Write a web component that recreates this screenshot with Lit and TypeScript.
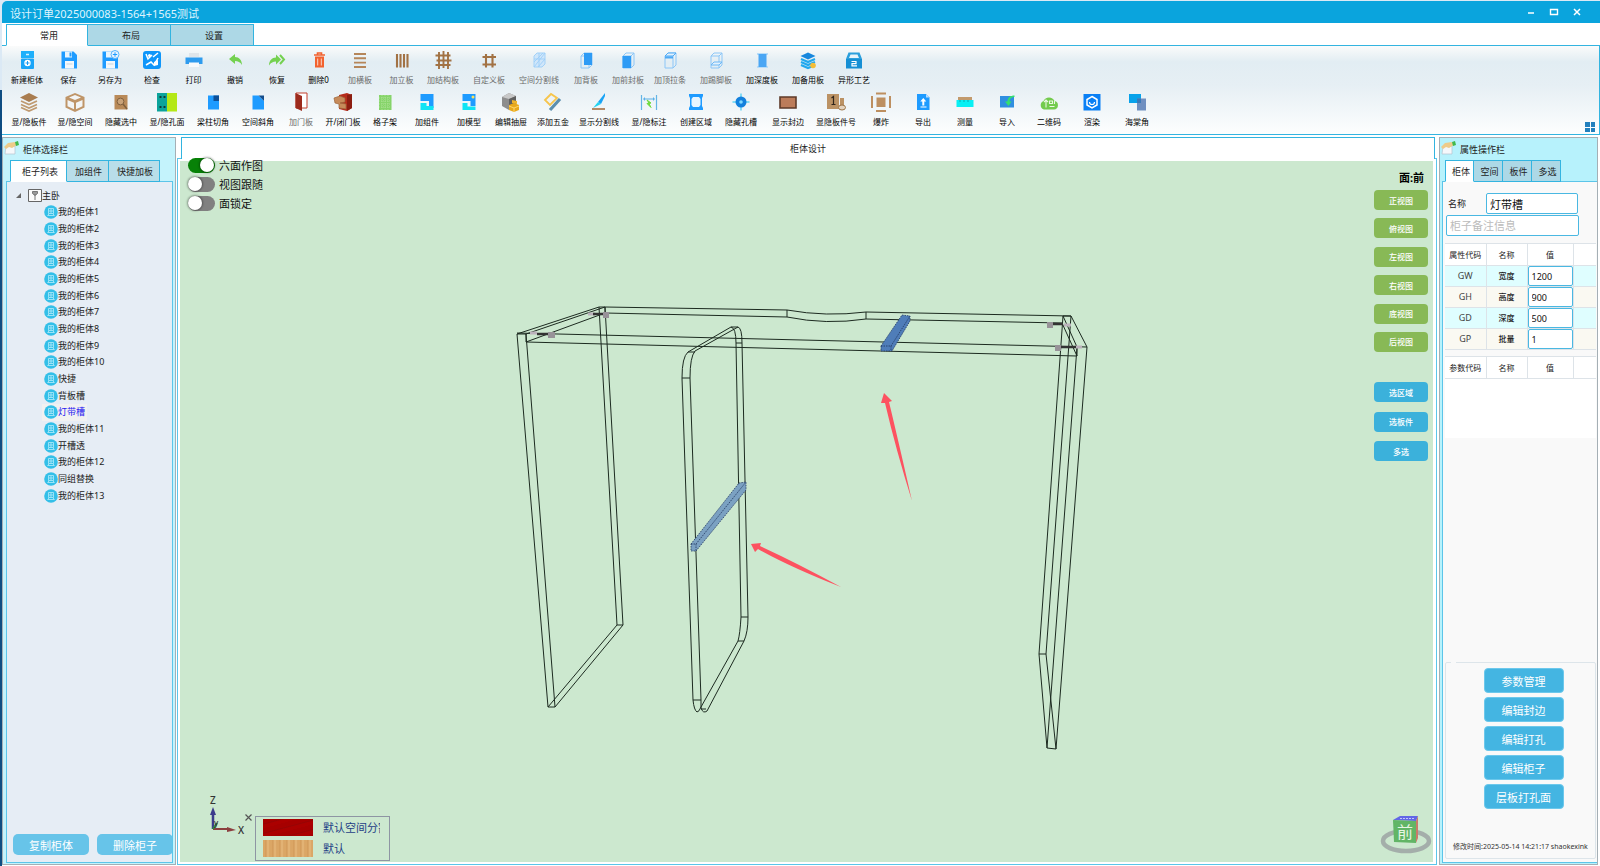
import { LitElement, html, css, svg, SVGTemplateResult } from "lit";
import { customElement, state } from "lit/decorators.js";
import { classMap } from "lit/directives/class-map.js";
import { styleMap } from "lit/directives/style-map.js";

const TAN = "#b5865a";
const BROWN = "#a27244";
const BLUE = "#1e9bff";
const CYAN = "#10e4f4";

const cubeFrame = svg`<path d="M5 6h8v12H5zM5 6l3-3h8v12l-3 3M13 6l3-3" fill="none" stroke="#8cc6f7" stroke-width="1"/>`;

const icons: Record<string, SVGTemplateResult> = {
  cabinet: svg`<rect x="4" y="1" width="13" height="7" fill="#1fb0fb"/><rect x="4" y="8.500" width="13" height="10.500" rx="1" fill="#1aa5f8"/><path d="M9 4.500h3" stroke="#d7f1ff" stroke-width="1.500"/><circle cx="10.500" cy="13" r="3.200" fill="#fff"/><path d="M8.500 13h4M10.500 11v4" stroke="#1a9df5"/>`,
  save: svg`<path d="M2.500 1.500h12l3.500 3.500v13.500h-15.500z" fill="${BLUE}"/><path d="M6 1.500h7v6h-7z" fill="#e8f4fd"/><path d="M10.500 2.500h2v4h-2z" fill="${BLUE}"/><path d="M6 11h9v7.500h-9z" fill="#f4f8fb"/><path d="M7.500 14h6" stroke="#c6d4de"/>`,
  saveas: svg`<path d="M2.500 1.500h12l3.500 3.500v13.500h-15.500z" fill="${BLUE}"/><path d="M6 1.500h6v6h-6z" fill="#e8f4fd"/><path d="M6 11h9v7.500h-9z" fill="#f4f8fb"/><path d="M7.500 14h6" stroke="#c6d4de"/><circle cx="15" cy="4.500" r="4" fill="#e6f3ff" stroke="#58b4fb"/><path d="M12.800 4.500h4.400M15 2.300v4.400" stroke="${BLUE}"/>`,
  check: svg`<rect x="1" y="1" width="18" height="18" rx="3" fill="#0f96fa"/><path d="M4 4l2 5 4-4M11 7l5-4M4 15l5-3 3 3 4-7" fill="none" stroke="#fff" stroke-width="1.500"/><circle cx="7.500" cy="5.500" r="1.500" fill="#fff"/><path d="M12 12l4-2v5l-4 1z" fill="#fff"/>`,
  print: svg`<path d="M5 3h10v4h-10z" fill="#dfe5ea"/><path d="M1.500 7.500h17v6.500h-17z" fill="#2e9bee"/><path d="M5 12.500h10v4.500h-10z" fill="#f7fafc"/>`,
  undo: svg`<path d="M4 9l6-5v3c4 0 7 3 7 8-2-3-4-4-7-4v3z" fill="#74d150"/>`,
  redo: svg`<path d="M14 9.500l-5-5v3c-4 0-7 3-7 8 2-3 4-4 7-4v3z" fill="#74d150"/><path d="M13 5l4 4.500-4 4.500" fill="none" stroke="#74d150" stroke-width="2"/>`,
  trash: svg`<path d="M5 5h11M8.500 5v-2h4v2" fill="none" stroke="#f2622f" stroke-width="1.600"/><path d="M6 6.500h9v11h-9z" fill="#f2622f"/><path d="M8.700 8.500v7M12.300 8.500v7" stroke="#fbe3da" stroke-width=".9"/>`,
  hboard: svg`<path d="M4 4h12M4 8.300h12M4 12.600h12M4 17h12" stroke="${TAN}" stroke-width="1.900"/>`,
  vboard: svg`<path d="M5 4v13.500M8.500 4v13.500M12 4v13.500M15.500 4v13.500" stroke="${BROWN}" stroke-width="2.100"/>`,
  grid3: svg`<path d="M6 2v17M10.500 1v17M15 2v17M2.500 5.500h15M3.500 10.500h15M2.500 15h15" stroke="${BROWN}" stroke-width="1.900"/>`,
  grid2: svg`<path d="M7 4v13.500M13.500 4v13.500M3.500 7h13.500M3.500 14.500h13.500" stroke="${BROWN}" stroke-width="2.100"/>`,
  split: svg`<path d="M5 6l3-3h8v11l-3 3h-8z" fill="#cfe6fa" stroke="#a2d1f8"/><path d="M5 17l11-14M5 12l9-9M9 17l7-8M5 9h11M10 3v14" stroke="#9ccef8" stroke-width=".9"/>`,
  back: svg`${cubeFrame}<path d="M8 3h8v12h-8z" fill="#2e9bf5"/>`,
  front: svg`${cubeFrame}<path d="M4.500 6h8.500v12h-8.500z" fill="#2e9bf5"/>`,
  top: svg`${cubeFrame}<path d="M5 6l3-3h8l-3 3z" fill="#e2f1fd" stroke="#4faaf5"/><path d="M5 6.500h8v2h-8z" fill="#4faaf5"/>`,
  foot: svg`${cubeFrame}<path d="M5 15l3-3h8l-3 3z" fill="#e2f1fd" stroke="#6db8f6"/>`,
  depth: svg`<path d="M5 3h11v2h-11zM5 16h11v2h-11z" fill="#b8dcf8"/><path d="M6.500 4h8v13h-8z" fill="#4aa6f4"/>`,
  spare: svg`<path d="M10 2.500l7.500 3.500-7.500 3.500-7.500-3.500z" fill="#1787dd"/><path d="M3 9l7 3 7-3M3 12l7 3 7-3M3 15l7 3 5-2" fill="none" stroke="#21a8ee" stroke-width="2.200"/><circle cx="15" cy="15.500" r="2.800" fill="#f4bd38"/>`,
  craft: svg`<path d="M2 9l2.500-6.500h11l2.500 6.500z" fill="#2b9fdc"/><path d="M5 8l1.500-3.500h7l1.500 3.500z" fill="#e8f4fa"/><path d="M2 9h16v9.500h-16z" fill="#168fd4"/><path d="M7.500 11.500h4.500v2.200h-4v2.200h5" fill="none" stroke="#fff" stroke-width="1.200"/>`,

  layers: svg`<path d="M10 1l9 4.500-9 4.500-9-4.500z" fill="#a97d50"/><path d="M2 9l8 3.500 8-3.500M2 12.500l8 3.500 8-3.500M2 15.500l8 3.500 8-3.500" fill="none" stroke="#bf9a70" stroke-width="1.700"/>`,
  box: svg`<path d="M10 1l9.500 4v10.500l-9.500 4.500-9.500-4.500v-10.500z" fill="#bf9568"/><path d="M10 3l6 2.500-6 2.500-6-2.500zM2.500 8l6.500 2.800v6.500l-6.500-3zM17.500 8l-6.500 2.800v6.500l6.500-3z" fill="#f3f5f5"/>`,
  hidden: svg`<path d="M3.500 3h13v14.500h-13z" fill="#b98a58"/><circle cx="9.500" cy="9.500" r="3.400" fill="#c9a278" stroke="#80603d"/><path d="M12 12l4 5" stroke="#80603d" stroke-width="1.500"/>`,
  holes: svg`<path d="M0 1h10v18.500h-10z" fill="#0ca39b"/><path d="M10 1h10v18.500h-10z" fill="#b4e817"/><path d="M2.500 5h2M6.500 5h2M2.500 15h2M6.500 15h2" stroke="#103838" stroke-width="1.800"/>`,
  notch: svg`<path d="M5 3.500h11v14h-11z" fill="${BLUE}"/><path d="M10.500 3.500h5.500v5.500h-5.500z" fill="#0d4f96"/>`,
  bevel: svg`<path d="M4.500 3.500h6l5.500 5.500v8.500h-11.500z" fill="${BLUE}"/><path d="M10.500 3.500h5.500v5.500z" fill="#144e8c"/>`,
  door: svg`<path d="M5 1h11v15h-11z" fill="#fff" stroke="#c3402f"/><path d="M4.500 1l6.500 3v15l-6.500-3z" fill="#9c2a1c"/>`,
  opendoor: svg`<path d="M6 3l8-2 5 2v13l-5 3-8-2z" fill="#b62b1a"/><path d="M14 3l5-1v14l-5 3z" fill="#8c1d10"/><path d="M1 6l6-2 5 2v4l-5 1 6 1v5l-7-1v-4l-4-1z" fill="#c78b5a" stroke="#99633a" stroke-width=".7"/>`,
  lattice: svg`<path d="M4 3h12.500v15h-12.500z" fill="#86d46a"/><path d="M4 6h12.500M4 9h12.500M4 12h12.500M4 15h12.500M7 3v15M10 3v15M13 3v15" stroke="#b4e6a0" stroke-width=".8" stroke-dasharray="1 1"/>`,
  part: svg`<path d="M3.500 2h13v14h-4.500v-7h-8.500z" fill="${BLUE}"/><path d="M3.500 11h6v3h7v4h-13z" fill="${CYAN}"/>`,
  model: svg`<path d="M3.500 2h13v12h-5v-5h-8z" fill="${BLUE}"/><circle cx="14" cy="5" r="1.500" fill="#ffe25a"/><path d="M3.500 11h5v3.500h8v3.500h-13z" fill="${CYAN}"/>`,
  drawer: svg`<path d="M1 5l7-4 7 3v11l-7 3-7-4z" fill="#8d8d8d"/><path d="M1 5l7-4 7 3-7 3z" fill="#c8c8c8"/><path d="M8 7l7-3v11l-7 3z" fill="#606060"/><path d="M8 13l5-2 5 2v5l-5 2-5-2z" fill="#e8a91d"/><path d="M11 8l5 1v3l-5-1z" fill="#efb52c"/><path d="M8 14l5 2 5-2M13 16v4" stroke="#ffd86b" fill="none"/>`,
  hardware: svg`<path d="M2 8l6-6 6 4-7 7z" fill="none" stroke="#f6c54c" stroke-width="1.800"/><path d="M7 18l10-11" stroke="#5b8fae" stroke-width="3.200"/>`,
  line: svg`<path d="M16 1l-7 9 3 2 4-8z" fill="#19a3f5"/><path d="M9 10l-5 6 8-4z" fill="#22d3f0"/><path d="M3 17h13" stroke="#b48a66" stroke-width="2"/>`,
  mark: svg`<path d="M2.500 3v15M17.500 3v15" stroke="#63b5e6" stroke-width="1.200"/><path d="M4 7l2-2v1.500h8v-1.500l2 2-2 2v-1.500h-8v1.500z" fill="#5bb0e8"/><path d="M8 8l4 3-2 .5 2 4-4-4 2-.5z" fill="#6edb3c" stroke="#6edb3c"/>`,
  area: svg`<path d="M3 2h14v2l-1 2v8l1 2v2h-14v-2l1-2v-8l-1-2z" fill="${BLUE}"/><path d="M7 5h6l1.500 2v6l-1.500 2h-6l-1.500-2v-6z" fill="#e7f5ff"/>`,
  target: svg`<path d="M10 1.500v17M1.500 10h17" stroke="#62d5f5" stroke-width="1.500"/><circle cx="10" cy="10" r="5.500" fill="#1381dd"/><circle cx="10" cy="10" r="1.800" fill="#7fd8ff"/>`,
  edge: svg`<path d="M2 5h16v11h-16z" fill="#bc7c5a" stroke="#5d3a28" stroke-width="1.600"/>`,
  number: svg`<path d="M1 2h12v15h-12zM14 6h4v8h-4z" fill="#bb9264"/><path d="M5.500 6l2-1.500v8M5.500 12.500h4" fill="none" stroke="#2f241a" stroke-width="1.200"/><ellipse cx="16" cy="15.500" rx="3.500" ry="2.500" fill="#e4d4c0" stroke="#9b7447"/>`,
  explode: svg`<path d="M5.500 5.500h9v9.500h-9z" fill="#bd8f60"/><path d="M5 1.500h10M5 19h10M1 4v12M19 4v12" stroke="#bd8f60" stroke-width="2"/>`,
  exportf: svg`<path d="M4 2h9l3.500 3.500v12.500h-12.500z" fill="${BLUE}"/><path d="M10.300 6l3 3.500h-2v4h-2v-4h-2zM7.500 14.500h6v1h-6z" fill="#fff"/><path d="M13 2l3.500 3.500h-3.500z" fill="#b6dcff"/>`,
  measure: svg`<path d="M3 5h14v3h-14z" fill="#c29a6c"/><path d="M1.500 8h17v7h-17z" fill="#08f0f4"/><path d="M5 8v2M9 8v2M13 8v2" stroke="#0aa9b0"/>`,
  importf: svg`<path d="M3 4h14v11.500h-14z" fill="#2f8fe0"/><path d="M17.500 3.500c-4 0-7 2-7 6h-2.500l3.500 4.500 3-4.500h-2c0-3 2-4.500 5-4.500z" fill="#35e06c"/>`,
  qr: svg`<path d="M5 17.500a4.500 4.500 0 0 1-.5-8.500 6 6 0 0 1 11 0 4.300 4.300 0 0 1-.5 8.500z" fill="#73cb4d"/><path d="M5 10l2-2 2 2M7 8.500v7M10.500 9h3v2.500h-3zM10.500 14.500h5M15.500 9v3" fill="none" stroke="#e9f8e2" stroke-width="1.100"/>`,
  render: svg`<path d="M1.500 2h17v16.500h-17z" fill="#0a80f5"/><path d="M10 4.500l5 3v5.500l-5 3-5-3v-5.500z" fill="none" stroke="#fff" stroke-width="1.500"/><path d="M7.500 10a2.500 2.500 0 0 0 5 0" fill="none" stroke="#fff" stroke-width="1.200"/>`,
  corner: svg`<path d="M2 2h12v9h-12z" fill="#08a2ea"/><path d="M10 6.500h9v12h-9z" fill="#6f8fc0"/><path d="M10 6.500h4v4.500h-4z" fill="#3a79b8"/>`,
};

interface Tool {
  icon: string;
  label: string;
  width: number;
  off?: boolean;
}
const t = (icon: string, label: string, width: number, off = false): Tool => ({ icon, label, width, off });

const toolRows: Tool[][] = [
  [
    t("cabinet", "新建柜体", 42), t("save", "保存", 41), t("saveas", "另存为", 42), t("check", "检查", 42),
    t("print", "打印", 41), t("undo", "撤销", 42), t("redo", "恢复", 42), t("trash", "删除0", 41),
    t("hboard", "加横板", 42, true), t("vboard", "加立板", 41, true), t("grid3", "加结构板", 42, true),
    t("grid2", "自定义板", 50, true), t("split", "空间分割线", 50, true), t("back", "加背板", 44, true),
    t("front", "加前封板", 40, true), t("top", "加顶拉条", 44, true), t("foot", "加踢脚板", 48, true),
    t("depth", "加深度板", 44), t("spare", "加备用板", 48), t("craft", "异形工艺", 44),
  ],
  [
    t("layers", "显/隐板件", 46), t("box", "显/隐空间", 46), t("hidden", "隐藏选中", 46), t("holes", "显/隐孔面", 46),
    t("notch", "梁柱切角", 46), t("bevel", "空间斜角", 44), t("door", "加门板", 42, true), t("opendoor", "开/闭门板", 42),
    t("lattice", "格子架", 42), t("part", "加组件", 42), t("model", "加模型", 42), t("drawer", "编辑抽屉", 42),
    t("hardware", "添加五金", 42), t("line", "显示分割线", 50), t("mark", "显/隐标注", 50), t("area", "创建区域", 44),
    t("target", "隐藏孔槽", 46), t("edge", "显示封边", 48), t("number", "显隐板件号", 48), t("explode", "爆炸", 42),
    t("exportf", "导出", 42), t("measure", "测量", 42), t("importf", "导入", 42), t("qr", "二维码", 42),
    t("render", "渲染", 44), t("corner", "海棠角", 46),
  ],
];

const base = css`
  * { box-sizing: border-box; }
  button, input { font: inherit; color: inherit; margin: 0; padding: 0; }
  button { border: 0; background: none; white-space: nowrap; cursor: pointer; }
  svg { display: block; }
`;

@customElement("tool-ribbon")
export class ToolRibbon extends LitElement {
  static styles = [base, css`
    :host { display: block; position: relative; border: solid #33b4e0; border-width: 1px 1px 1px 0; padding: 4px 4px 6px;
      background: linear-gradient(#fafbfb, #e2edf3 18%, #e6eff4 45%, #fdfefe); }
    .row { display: flex; }
    .row + .row { margin-top: 6px; }
    .tool { display: flex; flex-direction: column; align-items: center; flex: none; gap: 4px; color: #000; font-size: 8px; line-height: 12px; }
    .tool svg { width: 20px; height: 20px; }
    .off { color: #6a6a6a; }
    .more { position: absolute; right: 4px; bottom: 2px; width: 10px; height: 10px; display: grid; grid-template-columns: 1fr 1fr; gap: 1px; }
    .more i { background: #2380bd; }
  `];
  render() {
    return html`${toolRows.map((row) => html`<div class="row">${row.map((tool) => html`
      <button class=${classMap({ tool: true, off: !!tool.off })} style=${styleMap({ width: `${tool.width}px` })}>
        <svg viewBox="0 0 20 20">${icons[tool.icon]}</svg><span>${tool.label}</span>
      </button>`)}</div>`)}
      <button class="more" aria-label="更多"><i></i><i></i><i></i><i></i></button>`;
  }
}

@customElement("cabinet-view")
export class CabinetView extends LitElement {
  static styles = [base, css`
    :host { display: flex; flex-direction: column; min-width: 0; }
    .tab { position: relative; margin: 0 2px -1px 4px; height: 22px; flex: none; border: 1px solid #33b4e0; border-bottom: 0; background: #fff; text-align: center; font-size: 9px; line-height: 22px; }
    .frame { flex: 1; min-height: 0; display: flex; border: 1px solid #5cc5ea; padding: 2px 3px 2px 2px; background: #fff; }
    .stage { position: relative; flex: 1; background: #cce8cf; }
    .scene { position: absolute; inset: 0; width: 100%; height: 100%; }
    .switches { position: absolute; left: 8px; top: -5px; display: flex; flex-direction: column; font-size: 11px; line-height: 19px; }
    .switch { display: flex; align-items: center; gap: 4px; color: #111; }
    .switch input { appearance: none; width: 27px; height: 15px; border-radius: 8px; background: #808080; }
    .switch input::before { content: ""; display: block; width: 14px; height: 14px; border-radius: 50%; background: #fff; box-shadow: 0 0 2px 1px #0005; }
    .switch input:checked { background: #078107; }
    .switch input:checked::before { margin-left: 12px; }
    .side { position: absolute; right: 5px; top: 9px; width: 54px; display: flex; flex-direction: column; }
    .face { text-align: right; padding-right: 4px; font-size: 11px; line-height: 16px; font-weight: 700; color: #000; margin-bottom: 4px; }
    .views { height: 162px; display: flex; flex-direction: column; justify-content: space-between; }
    .pick { margin-top: 30px; height: 79px; display: flex; flex-direction: column; justify-content: space-between; }
    .views button, .pick button { height: 20px; border-radius: 4px; background: #88b956; color: #fff; font-size: 8px; font-weight: 500; }
    .pick button { background: #3bb1db; }
    .legend { position: absolute; left: 75px; bottom: 1px; width: 135px; border: 1px solid #8e95a3; padding: 2px 9px 3px 7px; display: grid; gap: 4px; color: #1f3f86; font-size: 11px; line-height: 17px; }
    .entry { display: grid; grid-template-columns: 50px 1fr; gap: 10px; height: 17px; white-space: nowrap; }
    .entry span { overflow: hidden; }
    .red { background: repeating-linear-gradient(165deg, #a60000 0 4px, #960404 5px, #ab0000 6px 9px); }
    .wood { background: repeating-linear-gradient(90deg, #dba665 0 2px, #cf9656 3px, #e2b274 4px 6px, #d49c5b 7px); }
    .close { position: absolute; left: 62px; bottom: 38px; width: 13px; height: 13px; display: grid; place-items: center; }
    .close svg { width: 7px; height: 7px; }
  `];
  @state() private modes = [
    { name: "六面作图", on: true },
    { name: "视图跟随", on: false },
    { name: "面锁定", on: false },
  ];
  private scene() {
    return svg`
      <g fill="none" stroke="#1c2a20" stroke-width="1">
        <path d="M517 334L548 707H555L526 334M517 334L599 307M526 334L605 307M517 334H526V342M599 307L617 625H623L605 307M599 307H605M548 707L617 625M555 707L623 625"/>
        <path d="M605 307L787 310Q826 317 866 312L1071 316M605 313L787 317Q826 325 866 319L1062 323M787 310V317M866 312V319"/>
        <path d="M517 333L1087 347M526 342L1077 356M526 342L605 313M605 307V313M1077 347V356M1062 323L1077 356"/>
        <path d="M1063 316L1039 654L1047 748L1077 347L1063 316H1071L1046 654L1056 749L1087 347L1071 316M1039 654H1046M1047 748L1056 749"/>
        <path d="M682 378Q682 357 688 352L731 327Q736 328 736 343L741 617Q740 634 738 641L701 707Q699 712 697 712Q694 710 693 700Z"/>
        <path d="M690 378Q690 357 695 351L738 327Q742 328 742 343L748 617Q748 632 744 641L707 711Q703 714 701 708L701 700Z"/>
        <path d="M682 378H690M688 352H695M731 327H738M736 343H742M741 617H748M738 641H744M693 700H701M701 709H706"/>
      </g>
      <g stroke="#22375f" stroke-width=".8" stroke-dasharray="1.500 1">
        <path d="M881 346L902 315L910 316V321L892 351H881Z" fill="#4f7db9"/><path d="M881 346H891L910 316M891 346V351" fill="none"/>
        <path d="M691 544L739 483L746 482V490L696 551H691Z" fill="#7ba1c2"/><path d="M691 544H696L746 482M696 544V551" fill="none"/>
      </g>
      <path d="M530 333H537M588 314H595M1064 325H1071M1076 347H1082" stroke="#bbb2bc" stroke-width="3"/>
      <path d="M537 334H549M593 314H604M1053 324H1063M1060 347H1076" stroke="#333" stroke-width="2.500"/>
      <path d="M548 332h7v6h-7zM603 312h6v6h-6zM1047 322h6v6h-6zM1055 345h6v6h-6z" fill="#979298"/>
      <path d="M884 393L892 401L889 402Q897 435 912 501Q896 450 885 403L881 403Z" fill="#fd5260"/>
      <path d="M751 544L761 543L760 546Q797 563 841 587Q790 567 758 549L755 552Z" fill="#fd5260"/>
      <path d="M213 829V812" stroke="#3b3b8c" stroke-width="2.500"/><path d="M213 807l-3 8h6z" fill="#3b3b8c"/>
      <path d="M213 829H228" stroke="#8c3f3f" stroke-width="2"/><path d="M236 830l-9-3v5z" fill="#8c3f3f"/>
      <path d="M213 829l4-6" stroke="#2e8c3a" stroke-width="2"/>
      <g font-size="10" font-weight="500" fill="#333"><text x="210" y="804">Z</text><text x="238" y="834">X</text><text x="214" y="826" font-size="8">y</text></g>
      <ellipse cx="1406" cy="841" rx="23" ry="10" fill="none" stroke="#a4aeaa" stroke-width="4.500"/>
      <path d="M1393 820L1400 816H1418L1416 821Z" fill="#6266e6"/><path d="M1400 818.500h14" stroke="#c3c5fa" stroke-dasharray="2 1"/>
      <path d="M1416 821L1418 816V838L1416 843Z" fill="#cc7a6a"/><path d="M1393 820L1416 821V843L1394 842Z" fill="#62b566"/>
      <text x="1397" y="838" font-size="16" fill="#e7f5e4">前</text>`;
  }
  render() {
    return html`
      <div class="tab">柜体设计</div>
      <div class="frame"><div class="stage">
        <svg class="scene" viewBox="180 161 1253 701">${this.scene()}</svg>
        <div class="switches">${this.modes.map((m) => html`<label class="switch"><input type="checkbox" .checked=${m.on}>${m.name}</label>`)}</div>
        <div class="side">
          <div class="face">面:前</div>
          <div class="views">${["正视图", "俯视图", "左视图", "右视图", "底视图", "后视图"].map((v) => html`<button>${v}</button>`)}</div>
          <div class="pick">${["选区域", "选板件", "多选"].map((v) => html`<button>${v}</button>`)}</div>
        </div>
        <button class="close" aria-label="关闭图例"><svg viewBox="0 0 7 7"><path d="M.5.5l6 6M6.500.5l-6 6" stroke="#555" stroke-width="1.200"/></svg></button>
        <div class="legend">
          <div class="entry"><i class="red"></i><span>默认空间分割</span></div>
          <div class="entry"><i class="wood"></i><span>默认</span></div>
        </div>
      </div></div>`;
  }
}

@customElement("app-root")
export class AppRoot extends LitElement {
  static styles = [base, css`
    :host { display: block; height: 100vh; min-height: 620px; padding: 1px 0 0 2px; overflow: hidden; color: #222;
      font-family: "Noto Sans", "Noto Sans CJK SC", sans-serif; font-size: 9px;
      background: linear-gradient(#dbe9f5 90px, #0f4d82 90px); }
    .window { height: 100%; display: flex; flex-direction: column; background: #fff; border-radius: 5px 0 0 0; overflow: hidden; }
    .title { height: 22px; flex: none; display: flex; justify-content: space-between; align-items: center; padding: 2px 18px 0 8px; background: #0aa4dd; color: #dff4fd; font-size: 11px; }
    .controls { display: flex; gap: 13px; padding-bottom: 2px; }
    .controls svg { width: 10px; height: 10px; }
    .tabs { display: flex; position: relative; margin-bottom: -1px; z-index: 1; }
    .tabs button { border: 1px solid #33b4e0; border-width: 1px 1px 1px 0; background: #add8e6; height: 22px; line-height: 20px; padding: 1px 0 0; color: #222; }
    .tabs button:first-child { border-left-width: 1px; }
    .tabs .active { background: #fff; border-bottom-color: #fff; }
    .main-tabs { padding: 1px 0 0 4px; }
    .main-tabs button { width: 83px; padding-left: 4px; }
    .main-tabs .active { width: 82px; }
    .body { flex: 1; min-height: 0; display: grid; grid-template-columns: 174px minmax(0, 1fr) 159px; column-gap: 1px; padding: 2px 2px 2px 0; }
    cabinet-view { margin-right: 1px; }
    .panel { display: flex; flex-direction: column; min-height: 0; border: 1px solid #a5afb5; background: #c4f3fc; overflow: hidden; }
    .panel > header { height: 22px; flex: none; display: flex; align-items: center; gap: 4px; padding-left: 1px; }
    .panel > header svg { width: 15px; height: 14px; margin-bottom: 2px; }
    .left .tabs { padding-left: 7px; }
    .left .tabs button { padding: 1px 6px 0 8px; background: #b9dee9; }
    .left .tabs .active { padding: 1px 8px 0 11px; background: #fff; }
    .left .content { flex: 1; min-height: 0; margin: 0 2px 1px 3px; padding: 4px 0 7px; border: 1px solid #5cc5e9; background: #e6edf5; display: flex; flex-direction: column; }
    .root { display: flex; align-items: center; height: 18px; padding-left: 9px; }
    .root svg { width: 26px; height: 15px; }
    .tree { list-style: none; margin: 0; padding: 0 0 0 35px; height: 300px; display: grid; grid-auto-rows: 1fr; justify-items: start; }
    .tree li { display: flex; align-items: center; padding: 0 2px; line-height: 14px; }
    .tree svg { width: 14px; height: 14px; }
    .tree .selected { background: #f1f1f1; color: #2818f0; }
    .foot { margin-top: auto; display: flex; gap: 8px; padding-left: 6px; overflow: hidden; }
    .foot button { flex: none; width: 76px; height: 21px; border-radius: 5px; background: #67c4e9; color: #fff; font-size: 11px; }
    .right { background: #b7f2fc; }
    .right .tabs { padding-left: 5px; }
    .right .tabs button { width: 29px; padding-left: 3px; }
    .right .content { flex: 1; min-height: 0; display: flex; flex-direction: column; margin: 0 0 1px 2px; border: solid #5cc5e9; border-width: 1px 0 1px 1px; padding: 11px 1px 3px 2px; background: #f9f9f9; }
    .field { display: flex; align-items: center; padding: 0 18px 0 3px; }
    .field label { width: 38px; }
    .right input { border: 1px solid #4ab8e2; border-radius: 2px; background: #fff; width: 100%; height: 21px; padding: 0 3px; font-size: 11px; color: #111; }
    .field input { flex: 1; min-width: 0; }
    .note { padding: 1px 17px 7px 1px; display: flex; }
    input::placeholder { color: #bbb; opacity: 1; }
    table { border-collapse: collapse; table-layout: fixed; width: 100%; font-size: 8px; color: #222; text-align: center; background: #fff; }
    th, td { border: 1px solid #dde3e8; border-left: 0; padding: 0; height: 21px; line-height: 12px; }
    th { font-weight: 400; height: 22px; }
    th:last-child, td:last-child { border-right: 0; }
    .c1 { width: 41px; } .c2 { width: 41px; } .c3 { width: 46px; }
    tbody tr:nth-child(odd) { background: #dffeff; }
    tbody tr:nth-child(even) { background: #faf9f2; }
    td:first-child { font-size: 9px; color: #444; }
    td:nth-child(2) { font-weight: 500; }
    td input { display: block; }
    .right td input { height: 20px; font-size: 9px; }
    .params { margin-top: 6px; background: #fff; height: 82px; flex: none; }
    fieldset { margin: auto 0 0; min-width: 0; border: 1px solid #dde5ea; border-radius: 2px; padding: 0 4px 5px 10px; display: flex; flex-direction: column; align-items: center; gap: 4px; }
    legend { width: 5px; height: 12px; padding: 0; margin-left: -5px; }
    fieldset button { width: 80px; height: 25px; border-radius: 4px; border: 1px solid #6cc8ec; background: #44b5e2; color: #fff; font-size: 11px; }
    .stamp { align-self: flex-start; margin: 28px 0 0 -3px; font-size: 7px; line-height: 12px; white-space: nowrap; color: #333; }
  `];

  private cabinets = [
    "我的柜体1", "我的柜体2", "我的柜体3", "我的柜体4", "我的柜体5", "我的柜体6", "我的柜体7", "我的柜体8", "我的柜体9",
    "我的柜体10", "快捷", "背板槽", "灯带槽", "我的柜体11", "开槽透", "我的柜体12", "同组替换", "我的柜体13",
  ];
  private props = [
    ["GW", "宽度", "1200"], ["GH", "高度", "900"], ["GD", "深度", "500"], ["GP", "批量", "1"],
  ];
  private tabs(names: string[], cls = "") {
    return html`<nav class="tabs ${cls}">${names.map((n, i) => html`<button class=${classMap({ active: i === 0 })}>${n}</button>`)}</nav>`;
  }
  private panelIcon() {
    return html`<svg viewBox="0 0 15 14"><path d="M2 5h9v8H1z" fill="#f5f8fb" stroke="#b4c3cf" stroke-width=".7"/><path d="M0 6l4-4 7-1 2 3-5 3-3-1-3 2z" fill="#eecb8a"/><path d="M11 1l3-1 1 4-3 1z" fill="#41b94c"/></svg>`;
  }
  private columns() {
    return html`<colgroup><col class="c1"><col class="c2"><col class="c3"><col></colgroup>`;
  }
  render() {
    return html`<div class="window">
      <header class="title"><span>设计订单2025000083-1564+1565测试</span>
        <div class="controls">
          <button aria-label="最小化"><svg viewBox="0 0 10 10"><path d="M2 6h6" stroke="#fff" stroke-width="1.500"/></svg></button>
          <button aria-label="最大化"><svg viewBox="0 0 10 10"><path d="M1.500 2.500h7v5h-7z" fill="none" stroke="#fff" stroke-width="1.400"/></svg></button>
          <button aria-label="关闭"><svg viewBox="0 0 10 10"><path d="M2 2l6 6M8 2l-6 6" stroke="#fff" stroke-width="1.500"/></svg></button>
        </div>
      </header>
      ${this.tabs(["常用", "布局", "设置"], "main-tabs")}
      <tool-ribbon></tool-ribbon>
      <div class="body">
        <aside class="panel left">
          <header>${this.panelIcon()}<span>柜体选择栏</span></header>
          ${this.tabs(["柜子列表", "加组件", "快捷加板"])}
          <div class="content">
            <div class="root"><svg viewBox="0 0 26 15"><path d="M0 10h5v-5z" fill="#666"/><path d="M12.500 1.500h13v12h-13z" fill="#fafafa" stroke="#666"/><path d="M19 12V6M16.500 3.500h5v2l-2.500 2-2.500-2z" stroke="#777" fill="#999"/></svg><span>主卧</span></div>
            <ul class="tree">${this.cabinets.map((c) => html`<li class=${classMap({ selected: c === "灯带槽" })}>
              <svg viewBox="0 0 14 14"><circle cx="7" cy="7" r="6.800" fill="#33bfe8"/><path d="M4.500 3.500h5v5h-5zM7 3.500v5M4.500 6h5M3.500 10.500h7M5 8.500l-1 2M9 8.500l1 2" fill="none" stroke="#a5e6f8" stroke-width=".9"/></svg><span>${c}</span></li>`)}</ul>
            <div class="foot"><button>复制柜体</button><button>删除柜子</button></div>
          </div>
        </aside>
        <cabinet-view></cabinet-view>
        <aside class="panel right">
          <header>${this.panelIcon()}<span>属性操作栏</span></header>
          ${this.tabs(["柜体", "空间", "板件", "多选"])}
          <div class="content">
            <div class="field"><label for="name">名称</label><input id="name" value="灯带槽"></div>
            <div class="note"><input aria-label="柜子备注信息" placeholder="柜子备注信息"></div>
            <table>${this.columns()}
              <thead><tr><th>属性代码</th><th>名称</th><th>值</th><th></th></tr></thead>
              <tbody>${this.props.map(([code, name, value]) => html`<tr><td>${code}</td><td>${name}</td><td><input aria-label=${name} value=${value}></td><td></td></tr>`)}</tbody>
            </table>
            <div class="params"><table>${this.columns()}<thead><tr><th>参数代码</th><th>名称</th><th>值</th><th></th></tr></thead></table></div>
            <fieldset><legend></legend>
              ${["参数管理", "编辑封边", "编辑打孔", "编辑柜子", "层板打孔面"].map((b) => html`<button>${b}</button>`)}
              <div class="stamp">修改时间:2025-05-14 14:21:17 shaokexink</div>
            </fieldset>
          </div>
        </aside>
      </div>
    </div>`;
  }
}
